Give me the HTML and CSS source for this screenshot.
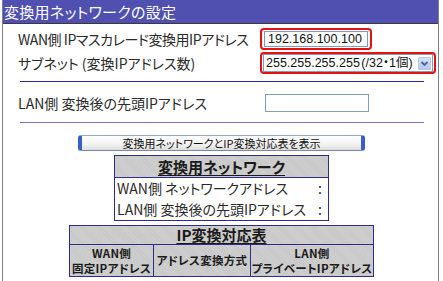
FILE: index.html
```html
<!DOCTYPE html>
<html lang="ja">
<head>
<meta charset="utf-8">
<link rel="stylesheet" href="styles.css">
</head>
<body>
<div class="win">
  <div class="title">変換用ネットワークの設定</div>
  <div class="content">
    <div class="row r1">
      <span class="label label-tight">WAN側 IPマスカレード変換用IPアドレス</span>
      <span class="hl hl-input"><span class="input">192.168.100.100</span></span>
    </div>
    <div class="row r2">
      <span class="label">サブネット (変換IPアドレス数)</span>
      <span class="hl hl-select">
        <span class="select">
          <span class="val">255.255.255.255 (/32・1個)</span>
          <span class="arrow"><svg width="13" height="13" viewBox="0 0 13 13"><path d="M3.5 5 L6.5 8 L9.5 5" fill="none" stroke="#4d6185" stroke-width="1.8"/></svg></span>
        </span>
      </span>
    </div>
    <div class="sep sep-dark"></div>
    <div class="row r3">
      <span class="label">LAN側 変換後の先頭IPアドレス</span>
      <span class="input input-plain"></span>
    </div>
    <div class="sep sep-light"></div>
    <div class="btnrow"><button class="btn">変換用ネットワークとIP変換対応表を表示</button></div>
    <div class="t1">
      <div class="thead">変換用ネットワーク</div>
      <div class="t1row"><span>WAN側 ネットワークアドレス</span><span>:</span></div>
      <div class="t1row"><span>LAN側 変換後の先頭IPアドレス</span><span>:</span></div>
    </div>
    <div class="t2">
      <div class="thead thead2">IP変換対応表</div>
      <div class="t2cols">
        <div class="c c1"><span>WAN側</span><span>固定IPアドレス</span></div>
        <div class="c c2"><span>アドレス変換方式</span></div>
        <div class="c c3"><span>LAN側</span><span>プライベートIPアドレス</span></div>
      </div>
    </div>
  </div>
</div>
</body>
</html>
```
FILE: styles.css
```css
html, body {
  margin: 0;
  padding: 0;
  background: #ffffff;
}
body {
  font-family: "Noto Sans CJK JP", "Noto Sans", sans-serif;
  font-feature-settings: "palt";
  color: #111;
  width: 443px;
  height: 281px;
  overflow: hidden;
}
.win {
  margin-left: 2px;
  width: 435px;
  height: 290px;
  border-left: 1px solid #808080;
  border-right: 1px solid #808080;
  background: #fff;
}
.title {
  height: 23px;
  background: #5050b0;
  border-bottom: 1px solid #3a3a3a;
  color: #fff;
  font-size: 15px;
  line-height: 23px;
  padding-left: 1px;
  letter-spacing: 0.3px;
}
.content {
  padding-top: 4px;
  display: flex;
  flex-direction: column;
}
.row {
  display: flex;
  align-items: center;
  padding-left: 15px;
}
.label {
  width: 242px;
  font-size: 14px;
  color: #2a2a2a;
  white-space: nowrap;
}
.label-tight { letter-spacing: -0.45px; }
.r1 { height: 22px; }
.r2 { height: 22px; margin-top: 2px; }
.r3 { height: 18px; margin-top: 12px; }
.hl {
  border: 2px solid #e81010;
  border-radius: 4px;
  display: flex;
  align-items: center;
}
.hl-input {
  padding: 1px 2px;
  height: 16px;
}
.hl-select {
  padding: 0 1px;
  height: 18px;
}
.input {
  box-sizing: border-box;
  width: 104px;
  height: 16px;
  border: 1px solid #7f9db9;
  background: #fff;
  font-family: "Liberation Sans", Arial, sans-serif;
  font-size: 12.5px;
  line-height: 14px;
  padding-left: 3px;
  color: #111;
}
.input-plain {
  margin-left: 5px;
  height: 18px;
}
.select {
  box-sizing: border-box;
  width: 170px;
  height: 18px;
  border: 1px solid #7f9db9;
  display: flex;
  align-items: center;
  justify-content: space-between;
  background: #fff;
}
.val {
  font-family: "Liberation Sans", "Noto Sans CJK JP", sans-serif;
  font-size: 12.5px;
  padding-left: 2px;
  line-height: 16px;
  color: #111;
  white-space: nowrap;
  word-spacing: -2px;
}
.arrow {
  width: 13px;
  height: 13px;
  margin-right: 1px;
  background: linear-gradient(#d6e2fb, #b4c8f4);
  border: 1px solid #b8c8ea;
  box-sizing: border-box;
  border-radius: 1px;
  display: flex;
}
.arrow svg { margin: -1px; }
.sep {
  margin-left: 17px;
  width: 404px;
  height: 1px;
}
.sep-dark {
  margin-top: 7px;
  background: #2828a0;
}
.sep-light {
  margin-top: 10px;
  background: #7474c4;
}
.btnrow {
  margin-top: 12px;
  display: flex;
  justify-content: center;
}
.btn {
  box-sizing: border-box;
  width: 287px;
  height: 16px;
  margin-left: 2px;
  padding: 0;
  font-family: "Noto Sans CJK JP", sans-serif;
  font-feature-settings: "palt";
  font-size: 11px;
  line-height: 13px;
  color: #111;
  border-top: 1px solid #9aa8c8;
  border-bottom: 1px solid #7b88a8;
  border-left: 4px solid #3560c8;
  border-right: 4px solid #3560c8;
  border-radius: 3px;
  background: linear-gradient(#ffffff, #f2f2f2 60%, #dcdcdc);
}
.t1 {
  margin: 4px auto 0;
  width: 215px;
  box-sizing: border-box;
  border: 1px solid #2c2c90;
  position: relative;
  left: 1px;
}
.thead {
  background-color: #c8c8c8;
  background-image: repeating-linear-gradient(45deg, rgba(255,255,255,0.12) 0 1px, transparent 1px 2px);
  height: 21px;
  line-height: 21px;
  border-bottom: 1px solid #2c2c90;
  text-align: center;
  font-weight: bold;
  font-size: 15px;
  text-decoration: underline;
  text-underline-offset: 2px;
  color: #1a1a1a;
}
.t1row {
  display: flex;
  justify-content: space-between;
  height: 21px;
  line-height: 21px;
  font-size: 14px;
  padding: 0 6px 0 2px;
  color: #2a2a2a;
  white-space: nowrap;
}
.t2 {
  margin: 4px auto 0;
  width: 305px;
  box-sizing: border-box;
  border: 1px solid #2c2c90;
  position: relative;
  left: 1px;
}
.thead2 {
  height: 18px;
  line-height: 18px;
}
.t2cols {
  display: flex;
  height: 31px;
}
.c {
  background-color: #c8c8c8;
  background-image: repeating-linear-gradient(45deg, rgba(255,255,255,0.12) 0 1px, transparent 1px 2px);
  font-weight: bold;
  font-size: 11.5px;
  line-height: 15px;
  letter-spacing: 0.3px;
  display: flex;
  flex-direction: column;
  align-items: center;
  justify-content: center;
  color: #1a1a1a;
  white-space: nowrap;
}
.c span { display: block; height: 15px; }
.c1 { width: 83px; border-right: 1px solid #2c2c90; }
.c2 { width: 96px; border-right: 1px solid #2c2c90; }
.c3 { flex: 1; }
```
